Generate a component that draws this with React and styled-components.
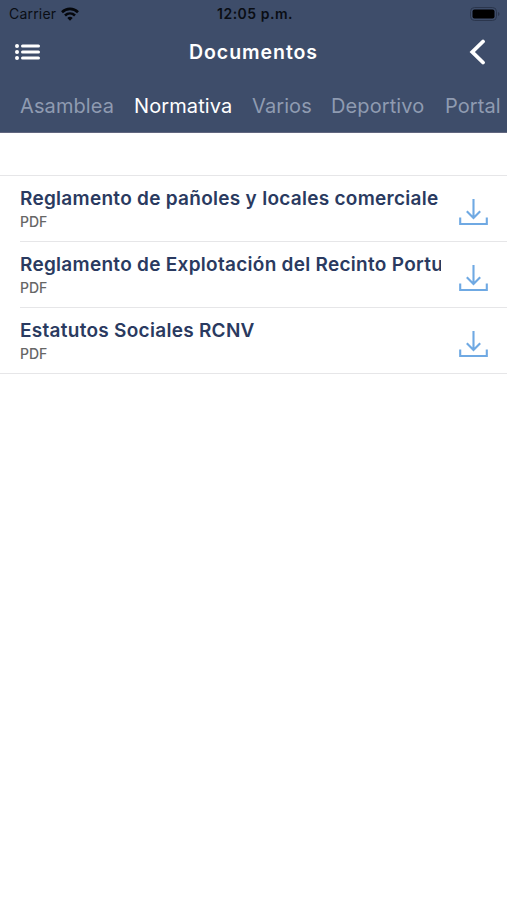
import React, { useState } from 'react';
import styled, { createGlobalStyle } from 'styled-components';

const GlobalStyle = createGlobalStyle`
  * {
    box-sizing: border-box;
  }

  body {
    margin: 0;
    background: #fff;
    font-family: Inter, 'Liberation Sans', sans-serif;
  }
`;

const Screen = styled.div`
  width: 507px;
  height: 900px;
  overflow: hidden;
  background: #fff;
`;

const Header = styled.header`
  height: 133px;
  background: #3e4d6a;
  border-bottom: 1px solid #61667f;
`;

const StatusBar = styled.div`
  display: grid;
  grid-template-columns: 1fr auto 1fr;
  align-items: center;
  height: 27px;
  padding: 0 6px 0 9px;
  color: #0a0d14;
  font-size: 14px;
  line-height: 27px;
`;

const Carrier = styled.div`
  display: flex;
  align-items: center;
  gap: 5px;
  letter-spacing: 0.2px;
`;

const Time = styled.span`
  font-weight: 600;
  letter-spacing: 0.5px;
`;

const Battery = styled.svg`
  justify-self: end;
`;

const TitleBar = styled.div`
  display: grid;
  grid-template-columns: 60px 1fr 60px;
  align-items: center;
  height: 50px;
`;

const IconButton = styled.button`
  display: flex;
  justify-content: ${({ $end }) => ($end ? 'flex-end' : 'flex-start')};
  padding: ${({ $end }) => ($end ? '0 21px 0 0' : '0 0 0 15px')};
  border: 0;
  background: none;
`;

const Title = styled.h1`
  margin: 0;
  color: #fff;
  font-size: 19.5px;
  font-weight: 600;
  line-height: 26px;
  letter-spacing: 0.95px;
  text-align: center;
`;

const Tabs = styled.nav`
  display: flex;
  height: 55px;
  padding-left: 20px;
  overflow: hidden;
`;

const Tab = styled.button`
  flex: 0 0 ${({ $width }) => $width}px;
  height: 55px;
  padding: 3px 0 0;
  border: 0;
  background: none;
  color: ${({ $active }) => ($active ? '#fff' : '#8f9bb1')};
  font: 400 20px/52px Inter, 'Liberation Sans', sans-serif;
  letter-spacing: 0.1px;
  text-align: left;
  white-space: nowrap;
`;

const List = styled.ul`
  margin: 42px 0 0;
  padding: 0;
  border-top: 1px solid #e6e6e8;
  border-bottom: 1px solid #e6e6e8;
  list-style: none;
`;

const Row = styled.li`
  display: flex;
  height: 66px;
  margin-left: 20px;
  padding-right: 19px;
  border-bottom: 1px solid #e6e6e8;

  &:last-child {
    height: 65px;
    border-bottom: 0;
  }
`;

const Info = styled.div`
  width: 421px;
  padding-top: 9px;
`;

const DocName = styled.div`
  overflow: hidden;
  color: #2a3a60;
  font-size: 19px;
  font-weight: 600;
  line-height: 27px;
  letter-spacing: 0.28px;
  white-space: nowrap;
`;

const DocType = styled.div`
  color: #666;
  font-size: 14px;
  font-weight: 500;
  line-height: 20px;
`;

const Download = styled.button`
  display: flex;
  align-items: center;
  height: 65px;
  margin-left: auto;
  padding: 6px 0 0;
  border: 0;
  background: none;
`;

const tabs = [
  { label: 'Asamblea', width: 114 },
  { label: 'Normativa', width: 118 },
  { label: 'Varios', width: 79 },
  { label: 'Deportivo', width: 114 },
  { label: 'Portal', width: 80 },
];

const documents = [
  'Reglamento de pañoles y locales comerciale',
  'Reglamento de Explotación del Recinto Portu',
  'Estatutos Sociales RCNV',
];

const WifiIcon = () => (
  <svg width="18" height="14" viewBox="0 0 18 14" fill="none" stroke="#05070c" strokeWidth="2.6">
    <path d="M1 5.2C5.5 .8 12.5 .8 17 5.2" />
    <path d="M4 8.5c2.9-2.7 7.100-2.7 10 0" />
    <path d="M6.3 10.9c1.6-1.5 3.8-1.5 5.4 0L9 13.7z" fill="#05070c" stroke="none" />
  </svg>
);

const MenuIcon = () => (
  <svg width="26" height="18" viewBox="0 0 26 18" stroke="#fff" strokeLinecap="round">
    <path d="M2 3h.01M2 9h.01M2 15h.01" strokeWidth="4" />
    <path d="M7.5 3h16M7.5 9h16M7.5 15h16" strokeWidth="3" />
  </svg>
);

const BackIcon = () => (
  <svg width="17" height="26" viewBox="0 0 17 26" fill="none" stroke="#fff" strokeWidth="3.8">
    <path d="M14 2.5L3.3 13 14 23.5" strokeLinecap="round" />
  </svg>
);

const DownloadIcon = () => (
  <svg width="29" height="28" viewBox="0 0 29 28" fill="none" stroke="#6fa9e3" strokeWidth="2.1">
    <path d="M14.5 1v19M7.8 13.3l6.7 6.7 6.7-6.7M1.200 19.500v6.500h26.600v-6.500" />
  </svg>
);

const App = () => {
  const [active, setActive] = useState('Normativa');

  return (
    <Screen>
      <GlobalStyle />
      <Header>
        <StatusBar>
          <Carrier>
            Carrier
            <WifiIcon />
          </Carrier>
          <Time>12:05 p.m.</Time>
          <Battery width="31" height="14" viewBox="0 0 31 14">
            <rect x=".5" y=".5" width="26" height="13" rx="4" fill="none" stroke="#2b364d" />
            <rect x="2.5" y="2.5" width="22" height="9" rx="2" fill="#000" />
            <path d="M28 5v4c2-.8 2-3.2 0-4z" fill="#2b364d" />
          </Battery>
        </StatusBar>
        <TitleBar>
          <IconButton aria-label="Menú">
            <MenuIcon />
          </IconButton>
          <Title>Documentos</Title>
          <IconButton $end aria-label="Volver">
            <BackIcon />
          </IconButton>
        </TitleBar>
        <Tabs>
          {tabs.map(({ label, width }) => (
            <Tab
              key={label}
              $width={width}
              $active={label === active}
              onClick={() => setActive(label)}
            >
              {label}
            </Tab>
          ))}
        </Tabs>
      </Header>
      <List>
        {documents.map((name) => (
          <Row key={name}>
            <Info>
              <DocName>{name}</DocName>
              <DocType>PDF</DocType>
            </Info>
            <Download aria-label="Descargar">
              <DownloadIcon />
            </Download>
          </Row>
        ))}
      </List>
    </Screen>
  );
};

export default App;
